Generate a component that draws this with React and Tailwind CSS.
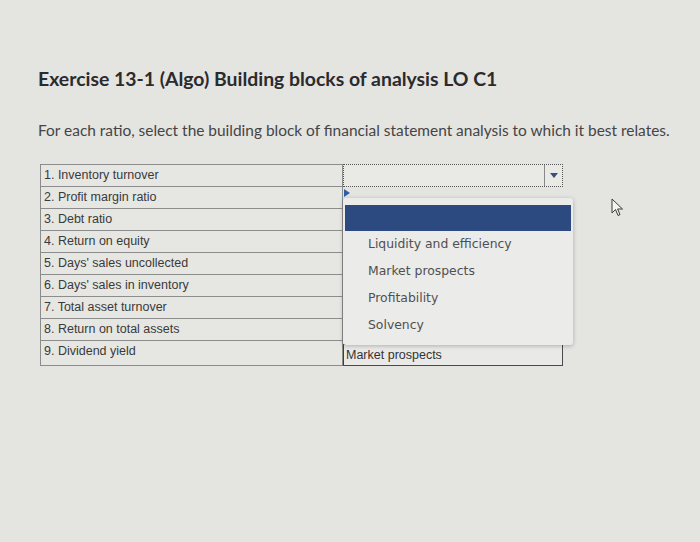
import React from "react";

const rows = [
  "1. Inventory turnover",
  "2. Profit margin ratio",
  "3. Debt ratio",
  "4. Return on equity",
  "5. Days' sales uncollected",
  "6. Days' sales in inventory",
  "7. Total asset turnover",
  "8. Return on total assets",
  "9. Dividend yield",
];

const options = ["Liquidity and efficiency", "Market prospects", "Profitability", "Solvency"];

export default function App() {
  return (
    <div className="w-[700px] h-[542px] overflow-hidden bg-[#e4e4e1] relative">
      <div className="pl-[38px] pt-[66px]">
        <h1 className="text-[19.4px] leading-[26px] font-bold text-[#2b2b2e] font-['Lato','Open_Sans',sans-serif]">
          Exercise 13-1 (Algo) Building blocks of analysis LO C1
        </h1>
        <p className="mt-[28px] text-[15.45px] leading-[20px] text-[#444446] font-['Lato',sans-serif]">
          For each ratio, select the building block of financial statement analysis to which it best relates.
        </p>
        <div className="mt-[24px] ml-[2px] flex">
          <div className="w-[303px] border border-[#8c8c8c] bg-[#e6e6e3]">
            {rows.map((r, i) => (
              <div
                key={i}
                className={`flex items-center pl-[3px] text-[12.5px] text-[#3a3a3a] font-['Liberation_Sans',Arial,sans-serif] ${i > 0 ? "h-[22px] border-t border-[#8c8c8c]" : "h-[21px]"}`}
              >
                {r}
              </div>
            ))}
          </div>
          <div className="relative w-[220px] flex flex-col">
            <div className="h-[23px] border border-dotted border-[#555] flex items-stretch justify-end bg-[#e9e9e6]">
              <div className="w-[18px] border-l border-[#888] flex items-center justify-center">
                <div className="w-0 h-0 border-l-[4px] border-r-[4px] border-t-[5px] border-l-transparent border-r-transparent border-t-[#33507f]" />
              </div>
            </div>
            <div className="h-[22px] relative">
              <div className="absolute left-[1px] top-[2px] w-0 h-0 border-t-[4px] border-b-[4px] border-l-[6px] border-t-transparent border-b-transparent border-l-[#2f5ea8]" />
            </div>
            <div className="h-[135px]" />
            <div className="h-[22px] border border-[#4a4a4a] border-l-[#2e3f66] flex items-center pl-[2px] text-[12.5px] text-[#333] font-['Liberation_Sans',Arial,sans-serif] bg-[#e9e9e7]">
              Market prospects
            </div>
            <div className="absolute left-0 top-[34px] w-[230px] h-[147px] bg-[#ebebea] rounded-[3px] shadow-[0_1px_4px_rgba(0,0,0,0.25)] pt-[7px] px-[2px]">
              <div className="h-[26px] bg-[#2c4a80]" />
              <div>
                {options.map((o) => (
                  <div
                    key={o}
                    className="h-[27px] flex items-center pl-[23px] text-[12.4px] text-[#505050] font-['DejaVu_Sans',Verdana,sans-serif]"
                  >
                    {o}
                  </div>
                ))}
              </div>
            </div>
          </div>
        </div>
      </div>
      <svg className="absolute left-[611px] top-[198px]" width="14" height="20" viewBox="0 0 14 20">
        <path d="M1 1 L1 15 L4.5 11.5 L7 17.5 L9 16.6 L6.6 11 L11.5 11 Z" fill="#f4f4f2" stroke="#3a3a3a" strokeWidth="1" strokeLinejoin="round" />
      </svg>
    </div>
  );
}
